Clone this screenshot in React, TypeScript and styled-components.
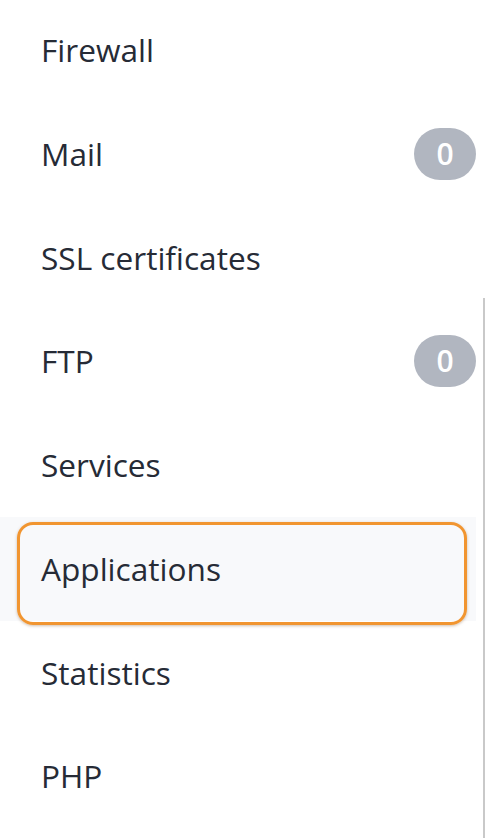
import React from "react";
import styled, { createGlobalStyle } from "styled-components";

const GlobalStyle = createGlobalStyle`
  html, body {
    margin: 0;
    padding: 0;
    background: #ffffff;
    overflow: hidden;
  }
  body {
    font-family: "Open Sans", "Noto Sans", sans-serif;
  }
`;

interface NavItem {
  label: string;
  count?: number;
  active?: boolean;
}

const items: NavItem[] = [
  { label: "Firewall" },
  { label: "Mail", count: 0 },
  { label: "SSL certificates" },
  { label: "FTP", count: 0 },
  { label: "Services" },
  { label: "Applications", active: true },
  { label: "Statistics" },
  { label: "PHP" },
];

const Sidebar = styled.nav`
  position: relative;
  width: 486px;
  height: 838px;
  overflow: hidden;
`;

const List = styled.ul`
  list-style: none;
  margin: -2px 0 0 0;
  padding: 0;
  width: 476px;
`;

const Row = styled.li<{ $active?: boolean }>`
  position: relative;
  display: flex;
  align-items: center;
  justify-content: space-between;
  height: 103.75px;
  padding: 0 0 0 41px;
  box-sizing: border-box;
  background: ${(p) => (p.$active ? "#f8f9fb" : "transparent")};
`;

const Label = styled.span`
  font-size: 31.6px;
  line-height: 1;
  color: #262b36;
`;

const Badge = styled.span`
  display: inline-flex;
  align-items: center;
  justify-content: center;
  width: 62px;
  height: 52px;
  border-radius: 26px;
  background: #b1b6c0;
  color: #ffffff;
  font-size: 30px;
  font-weight: 600;
  line-height: 1;
`;

const Highlight = styled.span`
  position: absolute;
  top: 5px;
  left: 17px;
  width: 450px;
  height: 103px;
  box-sizing: border-box;
  border: 3.5px solid #f19530;
  border-radius: 16px;
  box-shadow: 0 1px 3px rgba(120, 70, 20, 0.35);
  pointer-events: none;
`;

const ScrollThumb = styled.div`
  position: absolute;
  top: 298px;
  right: 1px;
  width: 2px;
  bottom: 0;
  background: #c9c9c9;
`;

const App: React.FC = () => {
  return (
    <>
      <GlobalStyle />
      <Sidebar>
        <List>
          {items.map((item) => (
            <Row key={item.label} $active={item.active}>
              <Label>{item.label}</Label>
              {item.count !== undefined && <Badge>{item.count}</Badge>}
              {item.active && <Highlight />}
            </Row>
          ))}
        </List>
        <ScrollThumb />
      </Sidebar>
    </>
  );
};

export default App;
